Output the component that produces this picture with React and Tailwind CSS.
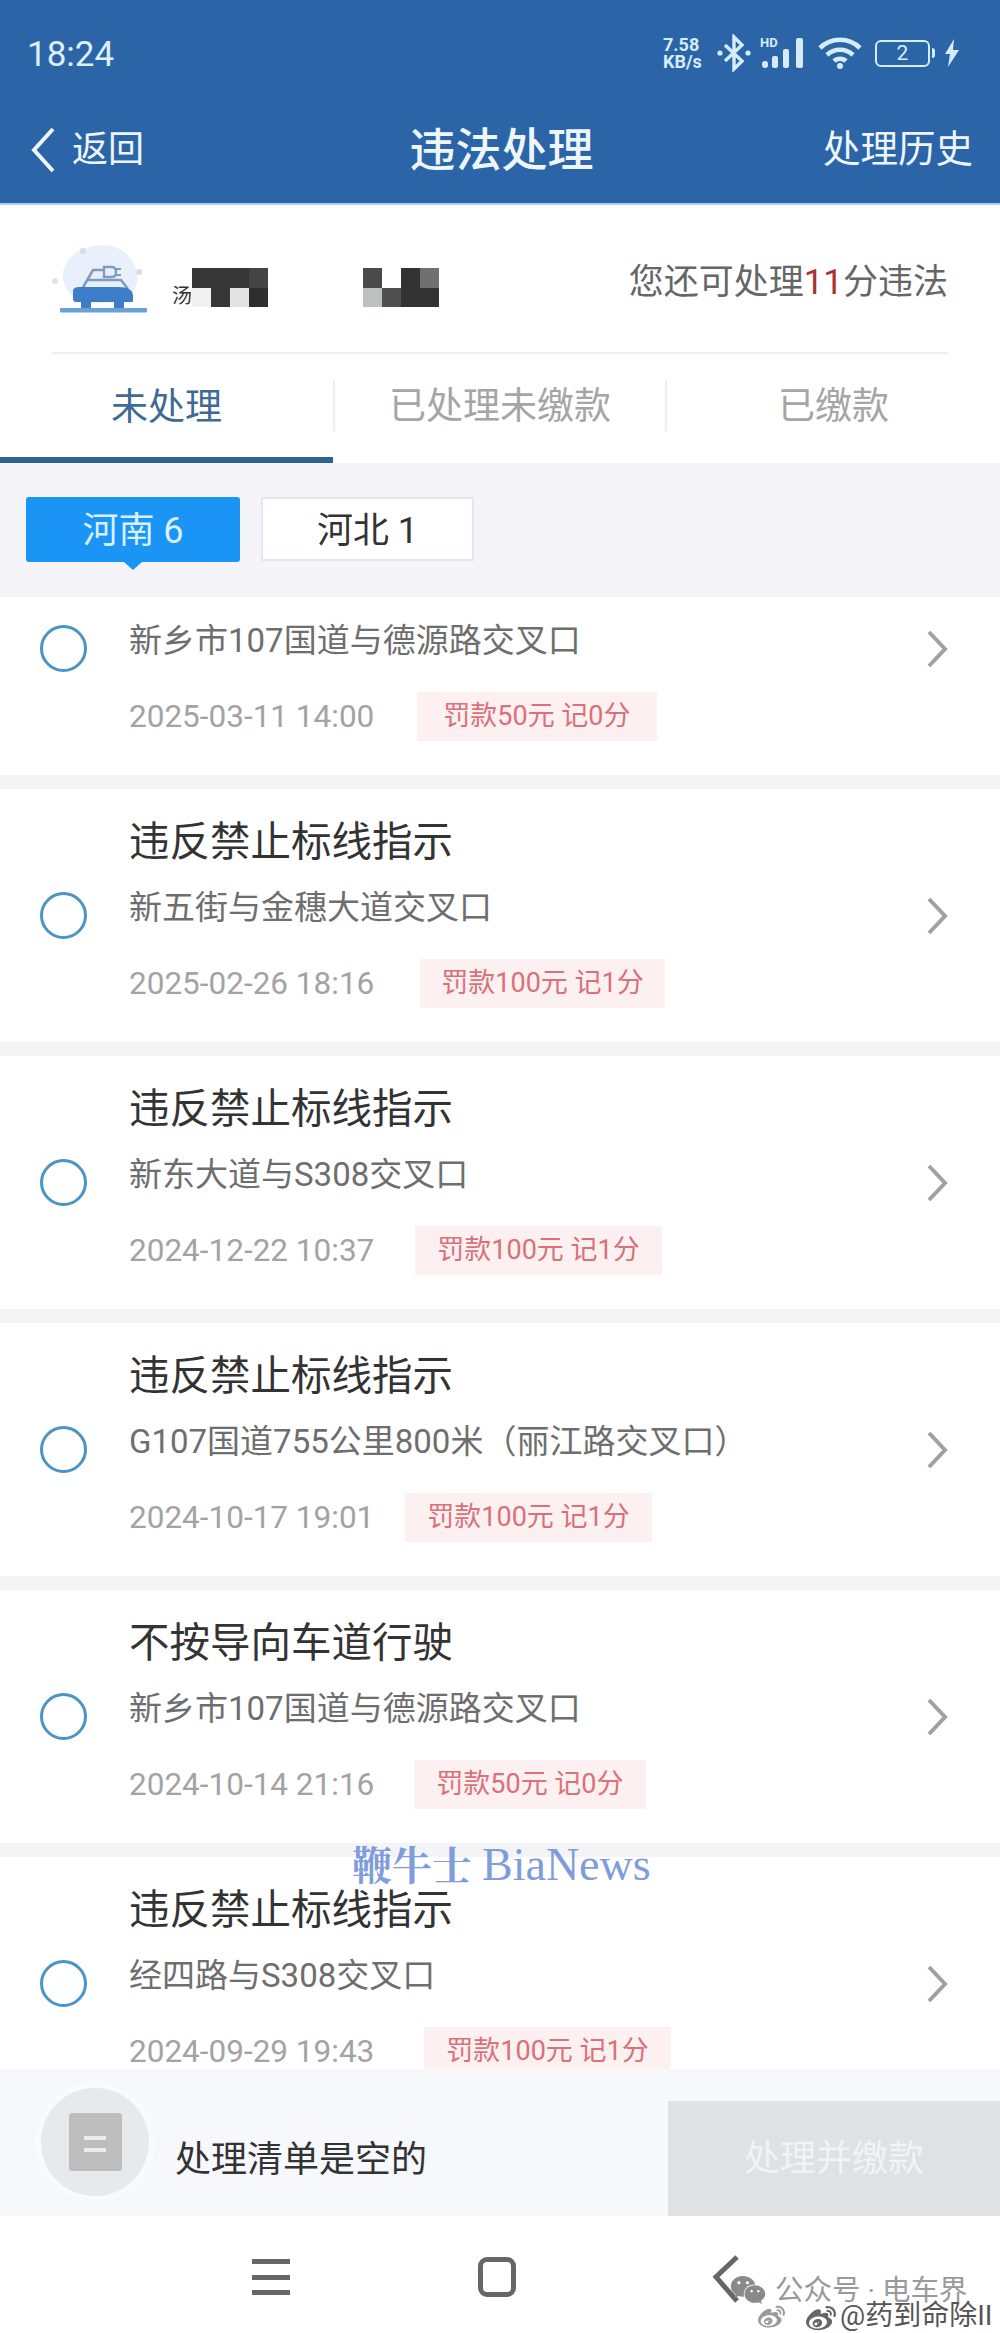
import { FaWeibo, FaWeixin } from 'react-icons/fa';

const violations = [
  { address: '新乡市107国道与德源路交叉口', time: '2025-03-11 14:00', fine: '罚款50元 记0分', box: 'ml-[43px] px-[26px]' },
  { title: '违反禁止标线指示', address: '新五街与金穗大道交叉口', time: '2025-02-26 18:16', fine: '罚款100元 记1分', box: 'ml-[46px] px-[21px]' },
  { title: '违反禁止标线指示', address: '新东大道与S308交叉口', time: '2024-12-22 10:37', fine: '罚款100元 记1分', box: 'ml-[41px] px-[22px]' },
  { title: '违反禁止标线指示', address: 'G107国道755公里800米（丽江路交叉口）', time: '2024-10-17 19:01', fine: '罚款100元 记1分', box: 'ml-[31px] px-[22px]' },
  { title: '不按导向车道行驶', address: '新乡市107国道与德源路交叉口', time: '2024-10-14 21:16', fine: '罚款50元 记0分', box: 'ml-[40px] px-[22px]' },
  { title: '违反禁止标线指示', address: '经四路与S308交叉口', time: '2024-09-29 19:43', fine: '罚款100元 记1分', box: 'ml-[50px] px-[22px]' },
];

function StatusIcons() {
  return (
    <div className="flex items-center text-[#d6ecf8]">
      <div className="w-[46px] text-[18px] leading-[17px] font-bold">
        <div>7.58</div>
        <div>KB/s</div>
      </div>
      <svg className="ml-[7px]" width="36" height="38" viewBox="0 0 36 38" fill="none" stroke="currentColor" strokeWidth="3.4">
        <path d="M9 11 L26 27 L18 35 V3 L26 11 L9 27" />
        <circle cx="4" cy="19" r="2.6" fill="currentColor" stroke="none" />
        <circle cx="32" cy="19" r="2.6" fill="currentColor" stroke="none" />
      </svg>
      <svg className="ml-[8px]" width="46" height="34" viewBox="0 0 46 34" fill="currentColor">
        <text x="0" y="11" fontSize="13" fontWeight="700" fontFamily="Roboto">HD</text>
        <rect x="2" y="25" width="6" height="7" rx="3" />
        <rect x="12" y="20" width="6" height="12" rx="2" />
        <rect x="23" y="13" width="6" height="19" rx="2" />
        <rect x="36" y="2" width="7" height="30" rx="2" />
      </svg>
      <svg className="ml-[11px]" width="46" height="34" viewBox="0 0 46 34" fill="none" stroke="currentColor" strokeWidth="4.6">
        <path d="M3 12 C14 1 32 1 43 12" />
        <path d="M10 19 C17 12 29 12 36 19" />
        <path d="M17 25 C20 22 26 22 29 25" />
        <circle cx="23" cy="30" r="3" fill="currentColor" stroke="none" />
      </svg>
      <div className="ml-[12px] flex h-[27px] w-[55px] items-center justify-center rounded-[6px] border-[2.5px] border-[#d6ecf8] text-[21px] leading-none">2</div>
      <div className="ml-[2px] h-[10px] w-[3px] rounded-r bg-[#d6ecf8]" />
      <svg className="ml-[9px]" width="16" height="28" viewBox="0 0 16 28" fill="currentColor">
        <path d="M10 0 L1 15 H6 L4 28 L15 11 H9 Z" />
      </svg>
    </div>
  );
}

function CarIcon() {
  return (
    <svg width="100" height="74" viewBox="0 0 100 74" fill="none">
      <path d="M11 36 C9 16 30 3 50 3 C72 3 87 20 85 40 C84 56 64 62 44 61 C26 60 13 52 11 36 Z" fill="#e9f0fb" />
      <circle cx="31" cy="9" r="3" fill="#d5dde6" />
      <circle cx="87" cy="30" r="3" fill="#d5dde6" />
      <circle cx="3" cy="39" r="3" fill="#dde3ea" />
      <path d="M30 47 L41 28 H52" stroke="#7f9cc0" strokeWidth="2.6" />
      <path d="M35 38 H69 L76 47" stroke="#7f9cc0" strokeWidth="2.6" />
      <path d="M52 25 H60 C63 25 64 28 64 30 C64 33 63 35 60 35 H52 Z" stroke="#7f9cc0" strokeWidth="2.4" />
      <path d="M64 27 H69 M64 33 H69" stroke="#7f9cc0" strokeWidth="2" />
      <path d="M21 49 C21 46 24 45 28 45 H66 C76 45 81 48 81 54 V59 C81 60 80 60 79 60 H24 C22 60 21 59 21 57 Z" fill="#3d7cc9" />
      <rect x="29" y="58" width="10" height="9" rx="2" fill="#3d7cc9" />
      <rect x="62" y="58" width="10" height="9" rx="2" fill="#3d7cc9" />
      <rect x="8" y="66" width="87" height="4.5" rx="1" fill="#6a9fd8" />
    </svg>
  );
}

function Mosaic() {
  return (
    <div className="ml-[20px] mt-[18px] flex items-end">
      <div className="mr-[-2px] mb-[1px] w-[22px] text-[20px] leading-none text-[#333]">汤</div>
      <div className="grid h-[39px] w-[76px] grid-cols-4 grid-rows-2">
        <div className="bg-[#363636]" />
        <div className="bg-[#363636]" />
        <div className="bg-[#363636]" />
        <div className="bg-[#444444]" />
        <div className="bg-[#f0f0f0]" />
        <div className="bg-[#363636]" />
        <div className="bg-[#e4e4e4]" />
        <div className="bg-[#2e2e2e]" />
      </div>
      <div className="ml-[95px] grid h-[39px] w-[76px] grid-cols-4 grid-rows-2">
        <div className="bg-[#4a4a4a]" />
        <div className="bg-white" />
        <div className="bg-[#333333]" />
        <div className="bg-[#707070]" />
        <div className="bg-[#bcc0bf]" />
        <div className="bg-[#505050]" />
        <div className="bg-[#333333]" />
        <div className="bg-[#333333]" />
      </div>
    </div>
  );
}

function ViolationCard({ item, first }) {
  return (
    <div className={`flex h-[253px] shrink-0 items-center bg-white pl-[40px] pr-[52px] ${first ? '-mt-[75px]' : ''}`}>
      <div className="h-[47px] w-[47px] shrink-0 rounded-full border-[3px] border-[#4b94c5]" />
      <div className="ml-[42px] flex-1 pt-[25px] pb-[34px]">
        {item.title ? (
          <div className="h-[56px] text-[40.5px] leading-[56px] text-[#333333]">{item.title}</div>
        ) : (
          <div className="h-[56px]" />
        )}
        <div className="mt-[15px] h-[46px] text-[33px] leading-[46px] text-[#6e6e6e]">{item.address}</div>
        <div className="mt-[28px] flex h-[49px] items-center">
          <span className="text-[31.5px] text-[#a3a3a3]">{item.time}</span>
          <span className={`${item.box} flex h-[49px] items-center bg-[#fdf0f0] text-[27px] text-[#d9707a]`}>{item.fine}</span>
        </div>
      </div>
      <svg className="shrink-0" width="22" height="38" viewBox="0 0 22 38" fill="none" stroke="#a0a0a0" strokeWidth="4">
        <path d="M3 2 L19 19 L3 36" />
      </svg>
    </div>
  );
}

function App() {
  return (
    <div className="relative flex h-[2333px] w-[1000px] flex-col overflow-hidden bg-white font-[Roboto,'Noto_Sans_CJK_SC',sans-serif]">
      {/* Header */}
      <div className="h-[205px] shrink-0 border-b-[2px] border-[#a9d3ec] bg-[#2b65a8] text-[#eef6fb]">
        <div className="flex h-[106px] items-center justify-between pl-[27px] pr-[40px]">
          <span className="mt-[4px] text-[35px] text-[#dceffa]">18:24</span>
          <StatusIcons />
        </div>
        <div className="flex h-[84px] items-center justify-between pl-[30px] pr-[27px] pt-[4px]">
          <div className="flex w-[300px] items-center">
            <svg width="26" height="46" viewBox="0 0 26 46" fill="none" stroke="currentColor" strokeWidth="4">
              <path d="M23 2 L4 23 L23 44" />
            </svg>
            <span className="ml-[16px] text-[36px] leading-none">返回</span>
          </div>
          <span className="text-[46px] leading-none font-medium">违法处理</span>
          <span className="w-[300px] text-right text-[37.5px] leading-none">处理历史</span>
        </div>
      </div>

      {/* Driver info */}
      <div className="shrink-0 px-[52px]">
        <div className="flex h-[149px] items-center border-b-[2px] border-[#efefef]">
          <CarIcon />
          <Mosaic />
          <div className="ml-auto mt-[10px] text-[35px] text-[#666666]">
            您还可处理<span className="text-[#a83232]">11</span>分违法
          </div>
        </div>
      </div>

      {/* Tabs */}
      <div className="flex h-[109px] shrink-0 items-stretch pt-[26px]">
        <div className="flex h-[83px] w-[333px] items-start justify-center border-b-[6px] border-[#2f6190] text-[37px] leading-[56px] text-[#3e6a94]">未处理</div>
        <div className="flex h-[51px] w-[334px] items-center justify-center border-x-[2px] border-[#eeeeee] pt-[3px] text-[37px] text-[#a5a5a5]">已处理未缴款</div>
        <div className="flex h-[51px] w-[333px] items-center justify-center pt-[3px] text-[37px] text-[#a5a5a5]">已缴款</div>
      </div>

      {/* Region filter */}
      <div className="flex h-[134px] shrink-0 gap-[21px] bg-[#f4f4f9] pl-[26px] pt-[34px]">
        <div className="relative flex h-[65px] w-[214px] items-center justify-center rounded-[3px] bg-[#1a94f5] pt-[3px] text-[36px] text-[#d8f0ff]">
          河南 6
          <div className="absolute -bottom-[8px] left-[98px] h-0 w-0 border-x-[9px] border-t-[8px] border-x-transparent border-t-[#1a94f5]" />
        </div>
        <div className="flex h-[64px] w-[213px] items-center justify-center border-[2px] border-[#dfe8ec] bg-white pt-[3px] text-[36px] text-[#333333]">河北 1</div>
      </div>

      {/* List, scrolled a little */}
      <div className="flex min-h-0 flex-1 flex-col gap-[14px] overflow-hidden bg-[#f4f4f7]">
        {violations.map((item, i) => (
          <ViolationCard key={item.time} item={item} first={i === 0} />
        ))}
      </div>

      {/* Bottom bar */}
      <div className="flex h-[147px] shrink-0 bg-[#f6f8fb]">
        <div className="ml-[41px] mt-[19px] flex h-[108px] w-[108px] items-center justify-center rounded-full bg-[#e8e9ea] ring-[6px] ring-[#f9fafc]">
          <div className="flex h-[58px] w-[53px] flex-col items-center justify-center gap-[8px] rounded-[3px] bg-[#bdbdbd] pt-[4px]">
            <div className="h-[4px] w-[22px] bg-[#ececec]" />
            <div className="h-[4px] w-[22px] bg-[#ececec]" />
          </div>
        </div>
        <div className="ml-[26px] mt-[66px] text-[36px] leading-[50px] text-[#333333]">处理清单是空的</div>
        <div className="ml-auto mt-[32px] flex h-[115px] w-[332px] items-center justify-center bg-[#dfe1e4] text-[36px] text-[#f1f3f5]">处理并缴款</div>
      </div>

      {/* System nav */}
      <div className="relative flex h-[117px] shrink-0 items-center bg-white">
        <div className="ml-[252px] mt-[5px] flex h-[36px] w-[38px] flex-col justify-between">
          <div className="h-[5px] bg-[#666666]" />
          <div className="h-[5px] bg-[#666666]" />
          <div className="h-[5px] bg-[#666666]" />
        </div>
        <div className="ml-[188px] mt-[5px] h-[40px] w-[38px] rounded-[9px] border-[5px] border-[#666666]" />
        <svg className="ml-[196px] mt-[9px]" width="28" height="48" viewBox="0 0 28 48" fill="none" stroke="#666666" strokeWidth="5">
          <path d="M25 2 L4 22 L25 46" />
        </svg>
      </div>

      {/* Watermarks over the page */}
      <div className="absolute left-[352px] top-[1842px] font-['Liberation_Serif','Noto_Serif_CJK_SC','Noto_Sans_CJK_SC',serif] text-[40px] leading-[46px] font-bold whitespace-nowrap text-[#7f9ddc]">
        鞭牛士 <span className="text-[46px] font-normal">BiaNews</span>
      </div>
      <FaWeixin className="absolute left-[730px] top-[2272px] text-[36px] text-[#8a8a8a]" />
      <div className="absolute left-[775px] top-[2271px] text-[28.5px] leading-[40px] whitespace-nowrap text-[#9a9a9a]">公众号 · 电车界</div>
      <FaWeibo className="absolute left-[758px] top-[2304px] text-[27px] text-[#9a9a9a]" />
      <FaWeibo className="absolute left-[806px] top-[2304px] text-[30px] text-[#666666]" />
      <div className="absolute left-[840px] top-[2299px] text-[28px] leading-[34px] whitespace-nowrap text-[#555555]">@药到命除II</div>
    </div>
  );
}

export default App;
